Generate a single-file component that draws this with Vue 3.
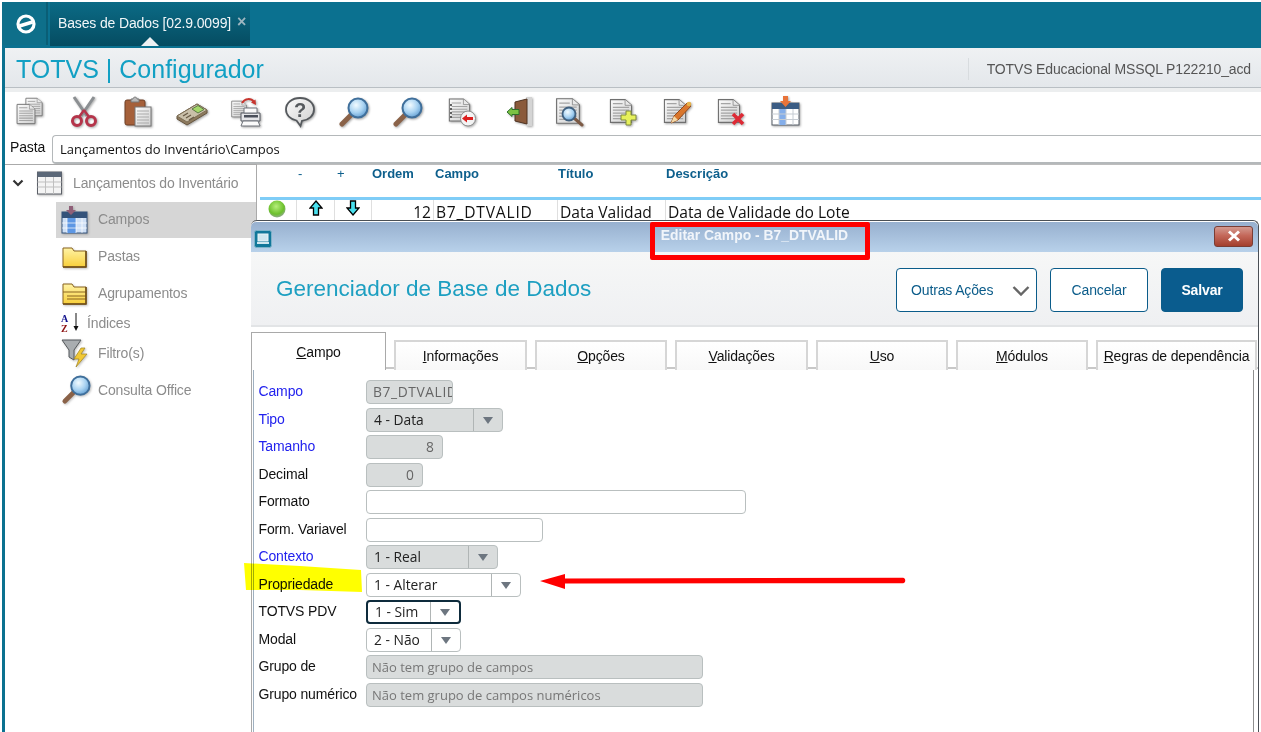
<template>
  <div class="screen">
    <!-- shared icon shapes -->
    <svg class="defs" aria-hidden="true">
      <defs>
        <linearGradient id="paper" x1="0" y1="0" x2="1" y2="1">
          <stop offset="0" stop-color="#fbfbfb" />
          <stop offset="1" stop-color="#cfcfcf" />
        </linearGradient>
        <radialGradient id="lens" cx="0.4" cy="0.35" r="0.7">
          <stop offset="0" stop-color="#f2fbff" />
          <stop offset="0.55" stop-color="#a9d3f2" />
          <stop offset="1" stop-color="#5e9bd0" />
        </radialGradient>
        <linearGradient id="folder" x1="0" y1="0" x2="0" y2="1">
          <stop offset="0" stop-color="#fff3a6" />
          <stop offset="1" stop-color="#f8cf3a" />
        </linearGradient>
        <radialGradient id="led" cx="0.45" cy="0.35" r="0.65">
          <stop offset="0" stop-color="#b6ee7a" />
          <stop offset="0.7" stop-color="#6cc02c" />
          <stop offset="1" stop-color="#8fa98a" />
        </radialGradient>
        <symbol id="doc" viewBox="0 0 32 32">
          <path d="M3 2H21L29 9V30H3Z" fill="url(#paper)" stroke="#6f6f6f" stroke-width="1.300" />
          <path d="M21 2V9H29" fill="#e8e8e8" stroke="#8a8a8a" />
          <path d="M6 7H18M6 11.500H26M6 15H26M6 18.500H26M6 22H26M6 25.500H26" stroke="#a4a4a4" stroke-width="1.500" />
        </symbol>
        <symbol id="glass" viewBox="0 0 32 32">
          <path d="M13 19L4 28" stroke="#8a6248" stroke-width="5" stroke-linecap="round" />
          <circle cx="20" cy="12" r="9.500" fill="url(#lens)" stroke="#3f6f9b" stroke-width="2" />
        </symbol>
      </defs>
    </svg>

    <header class="topbar">
      <div class="logo-box">
        <svg class="logo" viewBox="0 0 22 22">
          <circle cx="11" cy="11" r="8" fill="none" stroke="#fff" stroke-width="3.200" />
          <path d="M4.500 13L17.500 9" stroke="#fff" stroke-width="3.600" />
        </svg>
      </div>
      <div class="app-tab">
        <span>Bases de Dados [02.9.0099]</span>
        <span class="tab-close">×</span>
        <i class="tab-caret"></i>
      </div>
    </header>

    <div class="shell">
      <div class="titlebar">
        <h1>TOTVS | Configurador</h1>
        <div class="env">TOTVS Educacional MSSQL P122210_acd</div>
      </div>

      <div class="toolbar">
        <!-- copiar -->
        <svg class="tool" viewBox="0 0 32 32">
          <use href="#doc" x="10" y="0" width="20" height="22" />
          <use href="#doc" x="1" y="6" width="22" height="24" />
        </svg>
        <!-- recortar -->
        <svg class="tool" viewBox="0 0 32 32">
          <path d="M6 1L19 20M26 1L13 20" stroke="#8b8f92" stroke-width="3" />
          <circle cx="9" cy="25" r="4.500" fill="none" stroke="#b5344a" stroke-width="3" />
          <circle cx="23" cy="25" r="4.500" fill="none" stroke="#b5344a" stroke-width="3" />
          <path d="M16 14L11 21M16 14L21 21" stroke="#b5344a" stroke-width="2.400" />
        </svg>
        <!-- colar -->
        <svg class="tool" viewBox="0 0 32 32">
          <rect x="3" y="4" width="20" height="25" rx="2" fill="#a5603a" stroke="#6e3f25" />
          <path d="M9 6V3H11C11 0.500 15 0.500 15 3H17V6Z" fill="#b9b9b9" stroke="#777" />
          <rect x="13" y="11" width="16" height="19" fill="url(#paper)" stroke="#777" />
          <path d="M15 15H27M15 18H27M15 21H27M15 24H27M15 27H27" stroke="#aaa" />
        </svg>
        <!-- calculadora -->
        <svg class="tool" viewBox="0 0 32 32">
          <path d="M1 20L21 8L31 14V17L11 29L1 23Z" fill="#8d7a5e" stroke="#665640" />
          <path d="M1 20L21 8L31 14L11 26Z" fill="#c9bfa9" stroke="#7d6e55" />
          <path d="M16 13L22 9.500L28 13.500L22 17Z" fill="#a5d86b" stroke="#5d7a45" />
          <path d="M7 20L12 17M10 22L15 19M13 24L18 21" stroke="#6a5c47" stroke-width="1.400" />
        </svg>
        <!-- imprimir -->
        <svg class="tool" viewBox="0 0 32 32">
          <use href="#doc" x="0" y="3" width="18" height="20" />
          <path d="M12 7C15 2 21 2 24 6" fill="none" stroke="#c8352e" stroke-width="2" />
          <path d="M26 9L25.500 3.500L21 6.500Z" fill="#c8352e" />
          <path d="M11 17H30V25H11Z" fill="#e4e5e8" stroke="#565a63" />
          <path d="M14 12H27V17H14ZM13 25H28L30 30H11Z" fill="#fafafa" stroke="#6f737a" />
          <rect x="14" y="19" width="14" height="2.500" fill="#4a4f5a" />
        </svg>
        <!-- ajuda -->
        <svg class="tool" viewBox="0 0 32 32">
          <path d="M16 2C8 2 2 6.800 2 13.500C2 19 6.500 23 12.500 24.500L16.500 30L18 24.800C25 24 30 19.500 30 13.500C30 6.800 24 2 16 2Z" fill="url(#paper)" stroke="#55595d" stroke-width="1.800" />
          <text x="16" y="20.500" class="help-mark">?</text>
        </svg>
        <!-- busca -->
        <svg class="tool" viewBox="0 0 32 32"><use href="#glass" width="32" height="32" /></svg>
        <svg class="tool" viewBox="0 0 32 32"><use href="#glass" width="32" height="32" /></svg>
        <!-- lista e volta -->
        <svg class="tool" viewBox="0 0 32 32">
          <use href="#doc" x="1" y="0" width="25" height="28" />
          <path d="M5 9V9.100M5 13V13.100M5 17V17.100M5 21V21.100" stroke="#333" stroke-width="2" stroke-linecap="round" />
          <circle cx="22" cy="22.500" r="7.500" fill="#f4f4f4" stroke="#8b8b8b" />
          <path d="M16 22.500L21 18.500V21H27V24H21V26.500Z" fill="#dc1f1f" />
        </svg>
        <!-- sair -->
        <svg class="tool" viewBox="0 0 32 32">
          <rect x="26" y="1" width="6" height="29" fill="#d4d4d4" />
          <path d="M15 6L27 3V28L15 25Z" fill="#8a5a3b" stroke="#4f3322" />
          <path d="M7 16L12 11.500V13.500H19V18.500H12V20.500Z" fill="#7bc243" stroke="#2e6f2a" />
        </svg>
        <!-- pesquisar documento -->
        <svg class="tool" viewBox="0 0 32 32">
          <use href="#doc" x="0" y="0" width="28" height="30" />
          <path d="M20 22L28 29" stroke="#7d5a45" stroke-width="3" stroke-linecap="round" />
          <circle cx="15" cy="18" r="6.500" fill="url(#lens)" stroke="#40607f" stroke-width="1.800" />
        </svg>
        <!-- incluir -->
        <svg class="tool" viewBox="0 0 32 32">
          <use href="#doc" x="0" y="0" width="26" height="30" />
          <path d="M18 15H23V19H28V24H23V29H18V24H13V19H18Z" fill="#e6f05b" stroke="#7f8a3c" />
        </svg>
        <!-- alterar -->
        <svg class="tool" viewBox="0 0 32 32">
          <use href="#doc" x="0" y="0" width="26" height="30" />
          <path d="M9 27L12 20L25 7L29 10L16 24Z" fill="#d9762c" stroke="#8f4a1f" />
          <path d="M9 27L12 20L16 24Z" fill="#f3d9a8" />
          <circle cx="27" cy="8" r="2.300" fill="#e6b24a" />
        </svg>
        <!-- excluir -->
        <svg class="tool" viewBox="0 0 32 32">
          <use href="#doc" x="0" y="0" width="26" height="30" />
          <path d="M17 18L27 28M27 18L17 28" stroke="#dd2a35" stroke-width="3.600" />
        </svg>
        <!-- tabela -->
        <svg class="tool" viewBox="0 0 32 32">
          <rect x="2" y="7" width="27" height="22" fill="#fff" stroke="#555c66" />
          <rect x="2" y="7" width="27" height="6" fill="#3c5d84" />
          <rect x="9" y="13" width="7" height="16" fill="#84aeea" />
          <path d="M2 18H29M2 23.500H29M9 13V29M16 13V29M23 13V29" stroke="#c6ccd3" />
          <path d="M13 0H18V5H21L15.500 11L10 5H13Z" fill="#e8743a" />
        </svg>
      </div>

      <div class="pasta-row">
        <label>Pasta</label>
        <div class="pasta-input">Lançamentos do Inventário\Campos</div>
      </div>

      <div class="workspace">
        <nav class="tree">
          <div class="tree-root">
            <svg class="chevron" viewBox="0 0 12 8"><path d="M1.500 1.500L6 6L10.500 1.500" fill="none" stroke="#333" stroke-width="2.200" /></svg>
            <svg class="tree-table" viewBox="0 0 26 24">
              <rect x="1" y="1" width="24" height="22" fill="#f4f4f4" stroke="#5c6068" />
              <rect x="1" y="1" width="24" height="5" fill="#5c6878" />
              <path d="M1 11H25M1 16H25M9 6V23M17 6V23" stroke="#bfbfbf" />
            </svg>
            <span>Lançamentos do Inventário</span>
          </div>
          <div class="tree-item tree-item-on">
            <svg class="tree-icon" viewBox="0 0 28 28">
              <rect x="1" y="6" width="25" height="21" fill="#cfe0f6" stroke="#33527a" />
              <rect x="1" y="6" width="25" height="6" fill="#33527a" />
              <rect x="6" y="12" width="9" height="15" fill="#5d97e4" />
              <path d="M1 17H26M1 22H26M6 12V27M15 12V27M21 12V27" stroke="#fff" stroke-opacity=".7" />
              <path d="M8 0H12V4H15L10 9L5 4H8Z" fill="#8f5f78" />
            </svg>
            <span class="tree-label-up">Campos</span>
          </div>
          <div class="tree-item">
            <svg class="tree-icon" viewBox="0 0 28 28">
              <path d="M2 6H11L13 9H25V25H2Z" fill="url(#folder)" stroke="#8a6420" />
              <path d="M25 9V25H2" fill="none" stroke="#6e4c16" stroke-width="1.500" />
            </svg>
            <span>Pastas</span>
          </div>
          <div class="tree-item tree-item-group">
            <svg class="tree-icon" viewBox="0 0 28 28">
              <path d="M2 5H11L13 8H25V25H2Z" fill="url(#folder)" stroke="#8a6420" />
              <path d="M2 13H25M6 17H25M6 20H25" stroke="#8a6420" />
              <path d="M25 8V25H2" fill="none" stroke="#6e4c16" stroke-width="1.500" />
            </svg>
            <span>Agrupamentos</span>
          </div>
          <div class="tree-item tree-item-index">
            <svg class="tree-sort" viewBox="0 0 20 20">
              <text x="0" y="8.500" class="sort-a">A</text>
              <text x="0" y="19" class="sort-z">Z</text>
              <path d="M15 0V15" stroke="#111" />
              <path d="M12.500 13H17.500L15 18Z" fill="#111" />
            </svg>
            <span>Índices</span>
          </div>
          <div class="tree-item tree-item-filter">
            <svg class="tree-icon" viewBox="0 0 28 28">
              <path d="M1 1H20L13 11V21L8 18V11Z" fill="#a9adb0" stroke="#55595c" />
              <path d="M20 9L13 20H18L15 28L26 15H20L24 9Z" fill="#f2c935" stroke="#9d8122" stroke-width=".7" />
            </svg>
            <span>Filtro(s)</span>
          </div>
          <div class="tree-item tree-item-search">
            <svg class="tree-glass" viewBox="0 0 32 32"><use href="#glass" width="32" height="32" /></svg>
            <span>Consulta Office</span>
          </div>
        </nav>

        <section class="grid">
          <div class="grid-head">
            <span v-for="col in columns" :key="col" :class="{ 'head-sign': col === '-' || col === '+' }">{{ col }}</span>
          </div>
          <div class="grid-row">
            <div class="cell cell-icon cell-led">
              <svg viewBox="0 0 18 18" class="led"><circle cx="9" cy="9" r="8.500" fill="url(#led)" /></svg>
            </div>
            <div class="cell cell-icon">
              <svg viewBox="0 0 14 16" class="move"><path d="M7 1L13 8H9.500V15H4.500V8H1Z" fill="#49e0ee" stroke="#000" stroke-width="1.300" /></svg>
            </div>
            <div class="cell cell-icon">
              <svg viewBox="0 0 14 16" class="move"><path d="M7 15L13 8H9.500V1H4.500V8H1Z" fill="#49e0ee" stroke="#000" stroke-width="1.300" /></svg>
            </div>
            <div class="cell cell-num">12</div>
            <div class="cell cell-code">B7_DTVALID</div>
            <div class="cell">Data Validad</div>
            <div class="cell">Data de Validade do Lote</div>
          </div>
        </section>
      </div>
    </div>

    <!-- janela sobre a tela -->
    <div class="modal">
      <div class="modal-bar">
        <svg class="modal-icon" viewBox="0 0 18 18">
          <rect x="0.500" y="0.500" width="17" height="17" rx="2" fill="#11779a" stroke="#7fb3c9" />
          <rect x="4" y="4" width="10" height="7" fill="#cfe6ef" stroke="#e9f3f7" />
          <path d="M3 13H15" stroke="#cfe6ef" stroke-width="2" />
        </svg>
        <div class="modal-title">Editar Campo - B7_DTVALID</div>
        <button class="modal-close" type="button">
          <svg viewBox="0 0 14 12"><path d="M2 1.500L12 10.500M12 1.500L2 10.500" stroke="#fff" stroke-width="3" /></svg>
        </button>
      </div>

      <div class="modal-head">
        <h2>Gerenciador de Base de Dados</h2>
        <div class="modal-actions">
          <button class="btn btn-more" type="button">
            <span>Outras Ações</span>
            <svg viewBox="0 0 18 10"><path d="M1.500 1L9 8.500L16.500 1" fill="none" stroke="#666" stroke-width="2.400" /></svg>
          </button>
          <button class="btn btn-cancel" type="button">Cancelar</button>
          <button class="btn btn-save" type="button">Salvar</button>
        </div>
      </div>

      <div class="tabs">
        <div
          v-for="(tab, i) in tabs"
          :key="tab.name"
          class="tab"
          :class="{ 'tab-on': i === 0 }"
          :style="{ width: tab.width + 'px' }"
        ><u>{{ tab.name[0] }}</u>{{ tab.name.slice(1) }}</div>
      </div>

      <div class="form">
        <div v-for="f in fields" :key="f.label" class="form-row">
          <label :class="{ required: f.required }">{{ f.label }}</label>
          <div
            class="control"
            :class="[f.kind, { disabled: f.disabled, focused: f.focused, code: f.code }]"
            :style="{ width: f.width + 'px' }"
          >
            <span class="control-text">{{ f.value }}</span>
            <span v-if="f.kind === 'select'" class="control-arrow"><i></i></span>
          </div>
        </div>
      </div>
    </div>

    <!-- marcações feitas sobre a captura -->
    <div class="red-box"></div>
    <svg class="marks" viewBox="0 0 1261 732">
      <path d="M244 563L300 566L361 570L362 592L300 590L246 590Z" fill="#ffff00" class="marker" />
      <path d="M540 581L565 574V578.500L903 577.800C906 578 906 583 903 583.200L565 583.500V589Z" fill="#ff0000" />
    </svg>
  </div>
</template>

<script setup>
const columns = ['-', '+', 'Ordem', 'Campo', 'Título', 'Descrição']

const tabs = [
  { name: 'Campo', width: 135 },
  { name: 'Informações', width: 133 },
  { name: 'Opções', width: 132 },
  { name: 'Validações', width: 133 },
  { name: 'Uso', width: 132 },
  { name: 'Módulos', width: 132 },
  { name: 'Regras de dependência', width: 161 }
]

const fields = [
  { label: 'Campo', required: true, kind: 'input', value: 'B7_DTVALID', width: 87, disabled: true, code: true },
  { label: 'Tipo', required: true, kind: 'select', value: '4 - Data', width: 137, disabled: true },
  { label: 'Tamanho', required: true, kind: 'number', value: '8', width: 77, disabled: true },
  { label: 'Decimal', kind: 'number', value: '0', width: 57, disabled: true },
  { label: 'Formato', kind: 'input', value: '', width: 380 },
  { label: 'Form. Variavel', kind: 'input', value: '', width: 177 },
  { label: 'Contexto', required: true, kind: 'select', value: '1 - Real', width: 132, disabled: true },
  { label: 'Propriedade', kind: 'select', value: '1 - Alterar', width: 155 },
  { label: 'TOTVS PDV', kind: 'select', value: '1 - Sim', width: 95, focused: true },
  { label: 'Modal', kind: 'select', value: '2 - Não', width: 95 },
  { label: 'Grupo de', kind: 'input', value: 'Não tem grupo de campos', width: 337, disabled: true },
  { label: 'Grupo numérico', kind: 'input', value: 'Não tem grupo de campos numéricos', width: 337, disabled: true }
]
</script>

<style>
html,
body {
  margin: 0;
  background: #fff;
}
</style>

<style scoped>
.screen {
  position: relative;
  box-sizing: border-box;
  width: 1261px;
  height: 732px;
  padding: 2px 0 0 2px;
  overflow: hidden;
  background: #fff;
  font-family: "Liberation Sans", Arial, sans-serif;
  font-size: 14px;
  letter-spacing: -0.140px;
  color: #111;
}

.defs {
  display: block;
  width: 0;
  height: 0;
}

/* barra superior */
.topbar {
  display: flex;
  height: 46px;
  background: #0b7190;
}

.logo-box {
  display: flex;
  align-items: center;
  justify-content: center;
  box-sizing: border-box;
  width: 46px;
  height: 43px;
  padding-left: 3px;
  background: #0e6f8a;
  border-right: 2px solid #0a5e76;
}

.logo {
  width: 22px;
  height: 22px;
}

.app-tab {
  position: relative;
  display: flex;
  gap: 6px;
  box-sizing: border-box;
  width: 200px;
  height: 44px;
  margin-left: 2px;
  padding: 13px 0 0 8px;
  background: linear-gradient(#0b6b86, #054c61);
  color: #f1f6f8;
  white-space: nowrap;
}

.tab-close {
  margin-top: -2px;
  color: #9db6c0;
  font-size: 16px;
  font-weight: 700;
}

.tab-caret {
  position: absolute;
  left: 91px;
  bottom: 0;
  border-left: 9px solid transparent;
  border-right: 9px solid transparent;
  border-bottom: 9px solid #eef1f3;
}

.shell {
  display: flex;
  flex-direction: column;
  height: 684px;
  border-left: 3px solid #0b7190;
}

/* titulo */
.titlebar {
  display: flex;
  align-items: center;
  justify-content: space-between;
  box-sizing: border-box;
  height: 44px;
  padding: 0 10px 2px 11px;
  background:
    linear-gradient(#eceeef, #eceeef) left bottom / 100% 4px no-repeat,
    linear-gradient(#b9bfc4, #b9bfc4) left bottom 4px / 100% 1px no-repeat,
    linear-gradient(#eff1f3, #e2e6ea);
}

.titlebar h1 {
  margin: 0;
  color: #12a0c4;
  font-size: 25px;
  font-weight: 400;
  letter-spacing: 0;
}

.env {
  display: flex;
  align-items: center;
  height: 22px;
  padding-left: 18px;
  border-left: 1px solid #d8dcdf;
  color: #555;
}

/* ferramentas */
.toolbar {
  display: flex;
  gap: 22px;
  box-sizing: border-box;
  height: 43px;
  padding: 4px 0 0 9px;
}

.tool {
  flex: none;
  width: 32px;
  height: 32px;
  filter: drop-shadow(1px 1px 1px rgba(0, 0, 0, 0.35)) blur(0.3px);
}

.help-mark {
  fill: #55595d;
  font-family: "Liberation Sans", Arial, sans-serif;
  font-size: 20px;
  font-weight: 700;
  text-anchor: middle;
}

/* pasta */
.pasta-row {
  display: flex;
  align-items: center;
  height: 29px;
}

.pasta-row label {
  width: 47px;
  padding-left: 5px;
  box-sizing: border-box;
  margin-top: -6px;
}

.pasta-input {
  flex: 1;
  box-sizing: border-box;
  height: 29px;
  padding: 4px 0 0 7px;
  border: 1px solid #b4b8ba;
  border-width: 1px 0 2px 1px;
  border-radius: 4px 0 0 4px;
  font-family: "Open Sans", sans-serif;
  font-size: 13px;
  letter-spacing: 0;
}

.workspace {
  display: flex;
  flex: 1;
  min-height: 0;
}

/* arvore */
.tree {
  flex: none;
  box-sizing: border-box;
  width: 252px;
  padding-top: 6px;
  border: 1px solid #aaa;
  border-width: 1px 1px 0 0;
  color: #8c8c8c;
}

.tree-root {
  display: flex;
  align-items: center;
  height: 24px;
  padding-left: 7px;
  margin-bottom: 7px;
}

.chevron {
  width: 12px;
  height: 8px;
  margin-right: 12px;
}

.tree-table {
  width: 27px;
  height: 24px;
  margin-right: 10px;
  filter: drop-shadow(1px 1px 1px rgba(0, 0, 0, 0.3));
}

.tree-item {
  display: flex;
  align-items: center;
  box-sizing: border-box;
  height: 36.500px;
  margin-left: 51px;
  padding-left: 5px;
}

.tree-item-on {
  height: 36px;
  background: #d6d6d6;
}

.tree-label-up {
  margin-top: -2px;
}

.tree-item-group {
  height: 36px;
}

.tree-item-index {
  height: 25px;
}

.tree-item-filter {
  height: 35px;
}

.tree-item-search {
  height: 38px;
}

.tree-icon {
  flex: none;
  width: 28px;
  height: 28px;
  margin-right: 9px;
  filter: drop-shadow(1px 1px 1px rgba(0, 0, 0, 0.25));
}

.tree-sort {
  flex: none;
  width: 20px;
  height: 20px;
  margin-right: 6px;
}

.sort-a,
.sort-z {
  font-family: "Liberation Serif", serif;
  font-size: 10px;
  font-weight: 700;
}

.sort-a {
  fill: #10108c;
}

.sort-z {
  fill: #8c1010;
}

.tree-glass {
  flex: none;
  width: 31px;
  height: 31px;
  margin-right: 6px;
  filter: drop-shadow(1px 1px 1px rgba(0, 0, 0, 0.25));
}

/* grade */
.grid {
  flex: 1;
  min-width: 0;
  padding-left: 3px;
  border-top: 1px solid #bdbdbd;
}

.grid-head {
  display: grid;
  grid-template-columns: 39px 35px 63px 123px 108px 1fr;
  box-sizing: border-box;
  height: 35px;
  padding: 1px 0 0 38px;
  border-bottom: 3px solid #7fcdf7;
  color: #0d5f8c;
  font-size: 13px;
  font-weight: 700;
  letter-spacing: 0;
  line-height: 16px;
}

.head-sign {
  font-weight: 400;
}

.grid-row {
  display: grid;
  grid-template-columns: 36px 38px 37px 62px 124px 108px 1fr;
  height: 22px;
}

.cell {
  padding-left: 2px;
  border-left: 1px solid #dfdfdf;
  font-family: "Open Sans", sans-serif;
  font-size: 15.600px;
  letter-spacing: 0;
  line-height: 24px;
  white-space: nowrap;
  overflow: hidden;
}

.cell:first-child {
  border-left: 0;
}

.cell-icon {
  display: flex;
  justify-content: center;
  padding: 0;
}

.cell-led {
  padding-right: 2px;
}

.cell-num {
  padding-right: 2px;
  text-align: right;
}

.cell-code {
  letter-spacing: 0.800px;
}

.led {
  width: 18px;
  height: 18px;
}

.move {
  width: 14px;
  height: 16px;
}

/* janela */
.modal {
  position: absolute;
  left: 251px;
  top: 220px;
  box-sizing: border-box;
  width: 1008px;
  height: 520px;
  border: 1px solid #4a4f55;
  border-bottom: 0;
  border-left: 0;
  border-radius: 6px 6px 0 0;
  background: #fff;
}

.modal-bar {
  display: flex;
  align-items: center;
  box-sizing: border-box;
  height: 30px;
  padding: 0 5px 0 3px;
  margin-top: 1px;
  border-radius: 5px 5px 0 0;
  background: linear-gradient(#97b0cf, #b8d1ea);
}

.modal-icon {
  flex: none;
  width: 18px;
  height: 18px;
  margin-top: 3px;
}

.modal-title {
  flex: 1;
  padding-left: 23px;
  margin-top: -4px;
  color: #f1f5fa;
  font-size: 13.900px;
  font-weight: 700;
  letter-spacing: 0;
  text-align: center;
}

.modal-close {
  flex: none;
  width: 39px;
  height: 21px;
  padding: 0;
  margin-top: -2px;
  border: 1px solid #7a3d34;
  border-radius: 3px;
  background: linear-gradient(#d39a90, #c4685a 45%, #a33f2d);
}

.modal-close svg {
  display: block;
  width: 14px;
  height: 12px;
  margin: 0 auto;
}

.modal-head {
  display: flex;
  align-items: center;
  justify-content: space-between;
  box-sizing: border-box;
  height: 75px;
  padding: 0 15px 0 25px;
  border-bottom: 2px solid #e2e4e6;
  background: linear-gradient(#f6f7f7, #eff0f2);
}

.modal-head h2 {
  margin: 0;
  color: #1d9fc1;
  font-size: 22.500px;
  font-weight: 400;
  letter-spacing: 0;
}

.modal-actions {
  display: flex;
  gap: 13px;
  margin-top: 2px;
}

.btn {
  box-sizing: border-box;
  height: 44px;
  padding: 0;
  border: 1px solid #0b5c8a;
  border-radius: 4px;
  background: #fff;
  color: #0b5c8a;
  font-family: "Liberation Sans", Arial, sans-serif;
  font-size: 14px;
  letter-spacing: -0.140px;
}

.btn-more {
  display: flex;
  align-items: center;
  justify-content: space-between;
  width: 141px;
  padding: 0 6px 0 14px;
}

.btn-more svg {
  width: 18px;
  height: 10px;
  margin-top: 2px;
}

.btn-cancel {
  width: 98px;
}

.btn-save {
  width: 82px;
  background: #0a5c8e;
  color: #fff;
  font-weight: 700;
}

/* abas */
.tabs {
  display: flex;
  align-items: flex-end;
  gap: 8px;
  height: 43px;
  background: linear-gradient(#c8c8c8, #c8c8c8) left bottom 1px / 100% 2px no-repeat;
}

.tab {
  flex: none;
  box-sizing: border-box;
  height: 30px;
  padding-top: 6px;
  border: 2px solid #d6d6d6;
  border-bottom: 0;
  background: linear-gradient(#fff, #f8f8f8);
  text-align: center;
  white-space: nowrap;
}

.tab-on {
  height: 38px;
  padding-top: 11px;
  border: 1px solid #a9a9a9;
  border-bottom: 0;
  background: #fff;
}

/* formulario */
.form {
  display: grid;
  grid-auto-rows: 24px;
  row-gap: 3.500px;
  align-content: start;
  box-sizing: border-box;
  height: 372px;
  margin-right: 4px;
  padding: 10px 0 0 6.500px;
  border-right: 1px solid #8f8f8f;
  border-left: 1px solid #a9a9a9;
  box-shadow: inset 1px 0 0 #fff, inset 2px 0 0 #9fb0c0;
}

.form-row {
  display: flex;
  align-items: center;
}

.form-row label {
  flex: none;
  width: 107.500px;
  margin-top: -2px;
}

.form-row label.required {
  color: #2222ee;
}

.control {
  display: flex;
  box-sizing: border-box;
  height: 24px;
  border: 1px solid #b9bfbf;
  border-radius: 4px;
  background: #fff;
  font-family: "Open Sans", sans-serif;
  font-size: 13.800px;
  letter-spacing: 0;
  line-height: 22px;
  overflow: hidden;
}

.control.disabled {
  background: #d9dcdc;
}

.control.focused {
  border: 2px solid #0e2b3c;
  line-height: 20px;
}

.control-text {
  flex: 1;
  min-width: 0;
  padding-left: 7px;
  overflow: hidden;
  white-space: nowrap;
  color: #222;
}

.control.input .control-text {
  padding-left: 5px;
  color: #777;
  font-size: 13px;
}

.control.code .control-text {
  padding-left: 6px;
  color: #666;
  font-size: 13.800px;
  letter-spacing: 0.600px;
}

.control.number .control-text {
  padding-right: 8px;
  color: #666;
  text-align: right;
}

.control-arrow {
  display: flex;
  flex: none;
  align-items: center;
  justify-content: center;
  box-sizing: border-box;
  width: 29px;
  border-left: 1px solid #b0b5b5;
}

.control-arrow i {
  margin-top: 1px;
  border-left: 5px solid transparent;
  border-right: 5px solid transparent;
  border-top: 7px solid #6d7680;
}

/* marcacoes */
.red-box {
  position: absolute;
  left: 650px;
  top: 222px;
  box-sizing: border-box;
  width: 220px;
  height: 38px;
  border: 5px solid #ff0000;
  border-radius: 2px;
}

.marks {
  position: absolute;
  left: 0;
  top: 0;
  width: 1261px;
  height: 732px;
  pointer-events: none;
}

.marker {
  mix-blend-mode: multiply;
}
</style>
